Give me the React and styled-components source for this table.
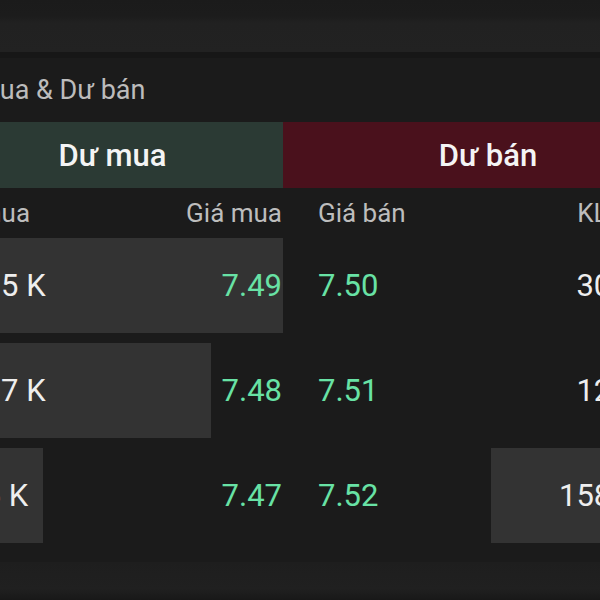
import React from 'react';
import styled, { createGlobalStyle } from 'styled-components';

// --- GLOBAL ---
const GlobalStyle = createGlobalStyle`
  html, body { margin: 0; padding: 0; background: #1b1b1b; }
  body { font-family: Roboto, "Noto Sans", "Liberation Sans", sans-serif; }
`;

// --- STYLED COMPONENTS ---
const Screen = styled.div`
  width: 600px; height: 600px; overflow: hidden; position: relative;
  background: #1b1b1b; display: flex; flex-direction: column;
`;
const TopBar = styled.div`
  height: 52px; flex-shrink: 0;
  background: linear-gradient(180deg, #1b1b1b 0%, #1c1c1c 30%, #212121 45%, #222222 100%);
  border-bottom: 6px solid #171717;
`;
const Panel = styled.div`
  width: 751px; margin-left: -58px; display: flex; flex-direction: column;
`;
const Title = styled.h2`
  margin: 0 0 0 -7px; height: 64px; display: flex; align-items: center;
  font-size: 27px; font-weight: 400; color: #bcbcbc;
  white-space: nowrap;
`;
const Halves = styled.div`
  display: grid; grid-template-columns: 341px 410px;
`;
const Tab = styled.div`
  height: 66px; display: flex; align-items: center; justify-content: center;
  background: ${p => (p.$side === 'buy' ? '#2b3a34' : '#4a111c')};
  color: #f4f4f4; font-size: 31px; font-weight: 500;
`;
const HeadCell = styled.div`
  height: 50px; display: flex; align-items: center;
  justify-content: space-between; color: #bdbdbd; font-size: 26px;
  padding: ${p => (p.$side === 'buy' ? '0 1px 0 0' : '0 36px 0 35px')};
  white-space: nowrap;
`;
const Rows = styled.div` display: flex; flex-direction: column; gap: 10px; `;
const Cell = styled.div`
  position: relative; height: 95px; display: flex; align-items: center;
  justify-content: space-between; font-size: 31px; white-space: nowrap;
  padding: ${p => (p.$side === 'buy' ? '0 1px 0 16px' : '0 29px 0 35px')};
`;
const Depth = styled.div`
  position: absolute; top: 0; bottom: 0; background: #333333;
  ${p => (p.$side === 'buy' ? 'left: 0;' : 'right: 0;')}
`;
const Volume = styled.span` position: relative; color: #eeeeee; `;
const Price = styled.span` position: relative; color: #68e2a5; `;
const BottomBar = styled.div`
  margin-top: auto; height: 38px;
  background: linear-gradient(180deg, #1e1e1e 0%, #202020 70%, #181818 100%);
`;

const levels = [
  { bidVol: '12.5 K', bid: '7.49', bidPct: 100, ask: '7.50', askVol: '30.2 K', askPct: 14 },
  { bidVol: '40.7 K', bid: '7.48', bidPct: 79, ask: '7.51', askVol: '12.8 K', askPct: 8 },
  { bidVol: '2.5 K', bid: '7.47', bidPct: 29.6, ask: '7.52', askVol: '158.4 K', askPct: 49.3 },
];

const App = () => (
  <Screen>
    <GlobalStyle />
    <TopBar />
    <Panel>
      <Title>Dư mua &amp; Dư bán</Title>
      <Halves>
        <Tab $side="buy">Dư mua</Tab>
        <Tab $side="sell">Dư bán</Tab>
        <HeadCell $side="buy"><span>KL mua</span><span>Giá mua</span></HeadCell>
        <HeadCell $side="sell"><span>Giá bán</span><span>KL bán</span></HeadCell>
        <Rows>
          {levels.map(l => (
            <Cell $side="buy" key={l.bid}>
              <Depth $side="buy" style={{ width: `${l.bidPct}%` }} />
              <Volume>{l.bidVol}</Volume>
              <Price>{l.bid}</Price>
            </Cell>
          ))}
        </Rows>
        <Rows>
          {levels.map(l => (
            <Cell $side="sell" key={l.ask}>
              <Depth $side="sell" style={{ width: `${l.askPct}%` }} />
              <Price>{l.ask}</Price>
              <Volume>{l.askVol}</Volume>
            </Cell>
          ))}
        </Rows>
      </Halves>
    </Panel>
    <BottomBar />
  </Screen>
);

export default App;
